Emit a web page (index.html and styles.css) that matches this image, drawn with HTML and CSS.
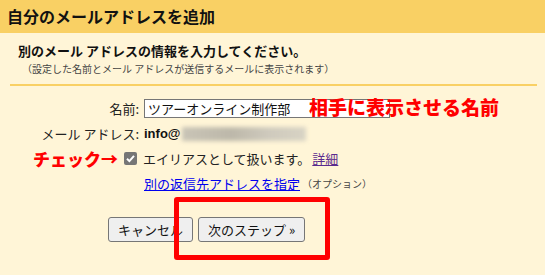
FILE: index.html
```html
<!DOCTYPE html>
<html lang="ja">
<head>
    <meta charset="UTF-8">
    <title>自分のメールアドレスを追加</title>
    <link rel="stylesheet" href="styles.css">
</head>
<body>
    <div class="header">自分のメールアドレスを追加</div>

    <div class="content">
        <p class="lead">別のメール アドレスの情報を入力してください。</p>
        <p class="note">（設定した名前とメール アドレスが送信するメールに表示されます）</p>

        <div class="form">
            <div class="row">
                <label class="label" for="name">名前:</label>
                <div class="field">
                    <input id="name" class="text-input" type="text" value="ツアーオンライン制作部">
                </div>
            </div>
            <div class="row">
                <span class="label">メール アドレス:</span>
                <div class="field">
                    <b class="mail">info@</b><span class="blur"></span>
                </div>
            </div>
            <div class="row">
                <span class="label"></span>
                <div class="field">
                    <span class="check">
                        <svg width="13" height="13" viewBox="0 0 13 13">
                            <rect x="0" y="0" width="13" height="13" rx="2" fill="#767676"/>
                            <path d="M3 6.8 L5.4 9.1 L10 3.9" fill="none" stroke="#fff" stroke-width="2"/>
                        </svg>
                    </span>
                    <span>エイリアスとして扱います。</span><a class="visited" href="#">詳細</a>
                </div>
            </div>
            <div class="row small-row">
                <span class="label"></span>
                <div class="field">
                    <a class="link" href="#">別の返信先アドレスを指定</a><span class="option">（オプション）</span>
                </div>
            </div>

            <!-- 注釈 -->
            <span class="memo memo-name">相手に表示させる名前</span>
            <span class="memo memo-check">チェック→</span>
        </div>

        <div class="buttons">
            <button class="btn">キャンセル</button>
            <button class="btn">次のステップ »</button>
            <span class="red-box"></span>
        </div>
    </div>
</body>
</html>
```

FILE: styles.css
```css
body {
    margin: 0;
    background-color: #fff5d7;
    font-family: "Noto Sans CJK JP", "Liberation Sans", sans-serif;
    color: #222;
    width: 545px;
    height: 275px;
    overflow: hidden;
}

.header {
    background-color: #f9d064;
    height: 33px;
    line-height: 33px;
    padding-left: 7px;
    font-size: 16px;
    font-weight: bold;
    color: #111;
}

.content {
    padding: 0 8px 0 10px;
}

.lead {
    margin: 9px 0 0 8px;
    font-size: 13px;
    font-weight: bold;
    line-height: 18px;
    color: #111;
}

.note {
    margin: 2px 0 0 12px;
    font-size: 10px;
    line-height: 14px;
    color: #444;
}

.form {
    position: relative;
    border-top: 2px solid #f9d064;
    margin-top: 8px;
    padding-top: 10px;
}

.row {
    display: flex;
    align-items: center;
    height: 25px;
    font-size: 13px;
}

.small-row {
    height: 24px;
}

.label {
    width: 129px;
    padding-right: 5px;
    text-align: right;
    color: #222;
}

.field {
    display: flex;
    align-items: center;
}

.text-input {
    width: 246px;
    height: 19px;
    box-sizing: border-box;
    border: 1px solid #767676;
    padding: 0 3px;
    font-family: inherit;
    font-size: 13px;
    background: #fff;
    color: #111;
}

.mail {
    font-family: "Liberation Sans", sans-serif;
    font-size: 13px;
    color: #111;
}

.blur {
    display: inline-block;
    width: 124px;
    height: 14px;
    margin-left: 1px;
    background: linear-gradient(90deg, #c9c4b6, #bdb8aa 40%, #cfcabd 70%, #d8d3c4);
    filter: blur(2px);
}

.check {
    display: flex;
    margin: 0 6px 0 -20px;
}

.visited {
    color: #5b2b8e;
    margin-left: 2px;
}

.link {
    color: #0000ee;
}

.option {
    font-size: 10px;
    color: #444;
    margin-left: 2px;
}

.memo {
    position: absolute;
    color: #ff0000;
    font-weight: 900;
    white-space: nowrap;
}

.memo-name {
    left: 299px;
    top: 7px;
    font-size: 19px;
}

.memo-check {
    left: 23px;
    top: 60px;
    font-size: 17px;
}

.buttons {
    position: relative;
    display: flex;
    gap: 5px;
    padding: 22px 0 0 98px;
}

.btn {
    height: 25px;
    padding: 0 9px;
    border: 1px solid #767676;
    border-radius: 3px;
    background-color: #efefef;
    font-family: inherit;
    font-size: 13px;
    color: #111;
}

.red-box {
    position: absolute;
    left: 164px;
    top: 2px;
    width: 146px;
    height: 53px;
    border: 5px solid #ff0000;
    border-radius: 3px;
}
```
